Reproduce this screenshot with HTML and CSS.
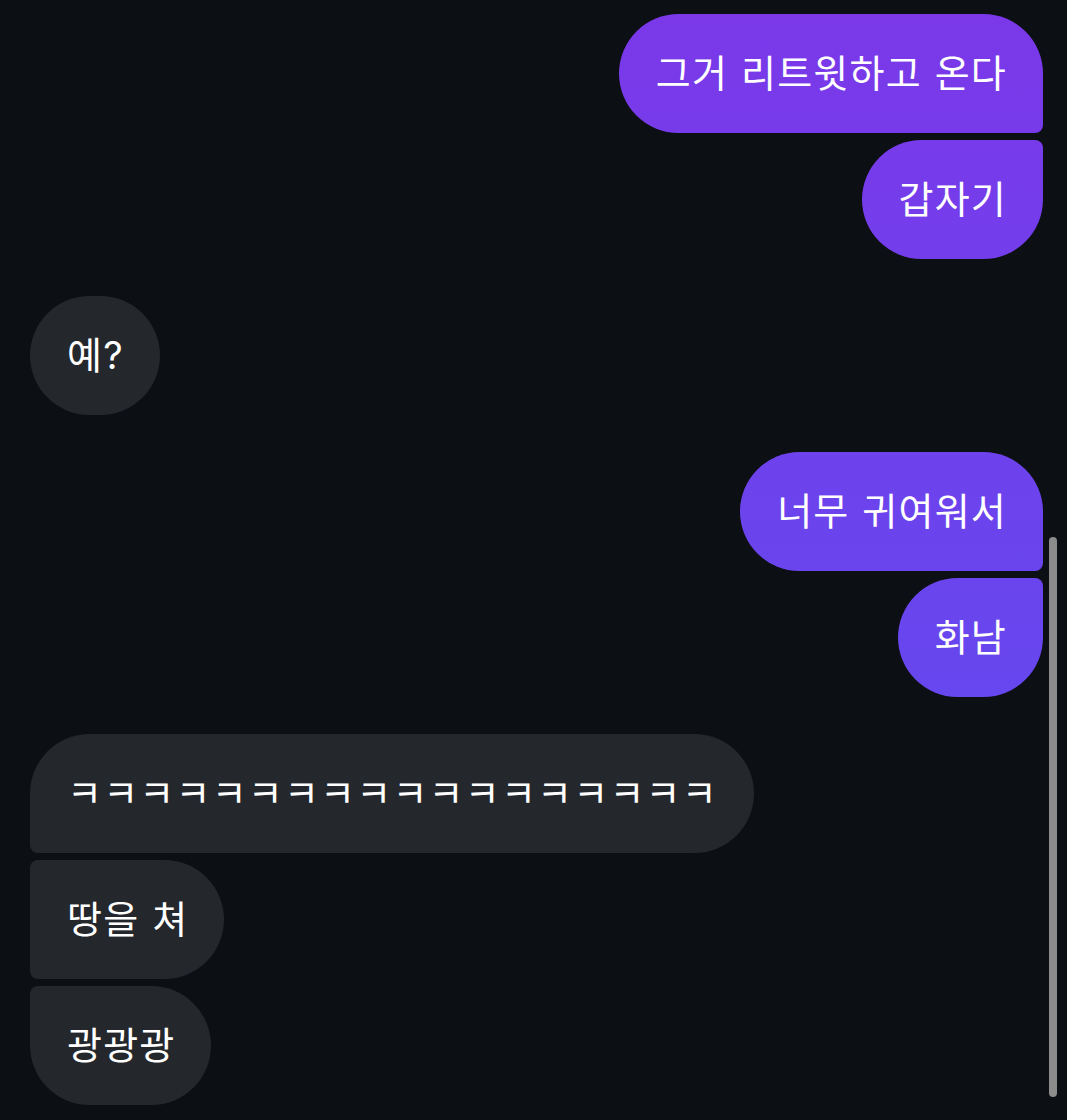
FILE: index.html
```html
<!DOCTYPE html>
<html>
<head>
<meta charset="utf-8">
<title>채팅</title>
<link rel="stylesheet" href="styles.css">
</head>
<body>
<div class="chat">
	<div class="group me">
		<div class="bubble">그거 리트윗하고 온다</div>
		<div class="bubble">갑자기</div>
	</div>
	<div class="group them">
		<div class="bubble">예?</div>
	</div>
	<div class="group me">
		<div class="bubble">너무 귀여워서</div>
		<div class="bubble">화남</div>
	</div>
	<div class="group them">
		<div class="bubble">ㅋㅋㅋㅋㅋㅋㅋㅋㅋㅋㅋㅋㅋㅋㅋㅋㅋㅋ</div>
		<div class="bubble">땅을 쳐</div>
		<div class="bubble">광광광</div>
	</div>
</div>
<div class="scrollbar"></div>
</body>
</html>
```
FILE: styles.css
```css
*{ margin:0; padding:0; box-sizing:border-box;}
body{ background:#0c0f14; font-family:"Inter","Noto Sans CJK KR",sans-serif; overflow:hidden;}
.chat{ display:flex; flex-direction:column; padding:14px 24px 0 30px;}
.group{ display:flex; flex-direction:column; gap:7px;}
.group + .group{ margin-top:37px;}
.me{ align-items:flex-end;}
.them{ align-items:flex-start;}
.bubble{ padding:36px 36px 36px 37px; font-size:38px; line-height:47px; color:#fff; border-radius:60px; white-space:nowrap; letter-spacing:1.2px; word-spacing:1px;}
.me .bubble{ background:linear-gradient(#7b38e9, #5a50f2) fixed;}
.me .bubble:not(:last-child){ border-bottom-right-radius:8px;}
.me .bubble:not(:first-child){ border-top-right-radius:8px;}
.them .bubble{ background:#24272c;}
.them .bubble:not(:last-child){ border-bottom-left-radius:8px;}
.them .bubble:not(:first-child){ border-top-left-radius:8px;}
.scrollbar{ position:fixed; top:537px; right:10px; width:8px; height:560px; border-radius:4px; background:#8c8c8c;}
```
